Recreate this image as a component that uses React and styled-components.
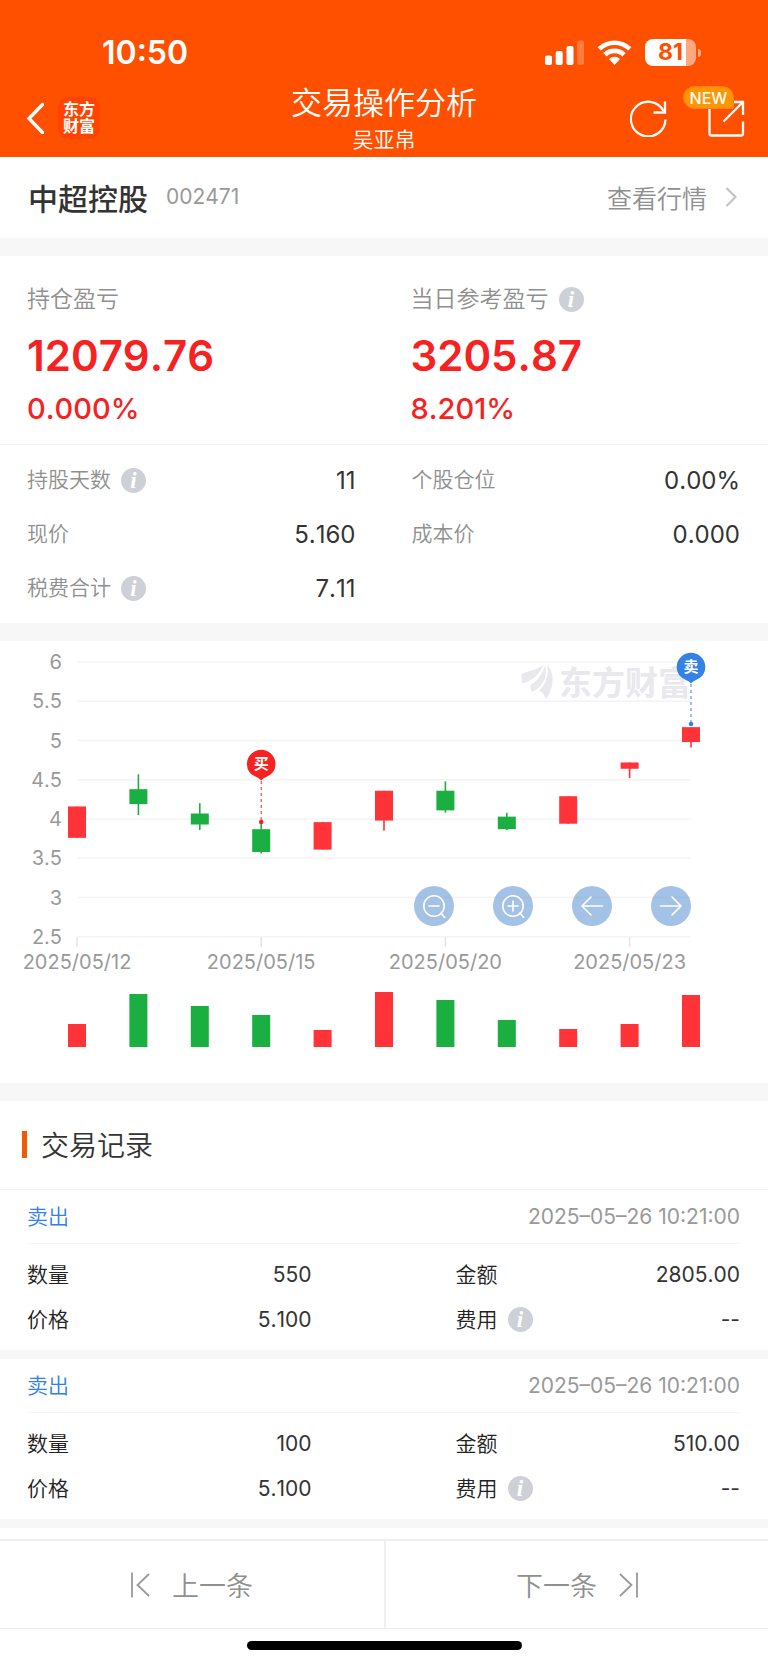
import React from 'react';
import styled, { createGlobalStyle } from 'styled-components';

const GlobalStyle = createGlobalStyle`
  * {
    box-sizing: border-box;
  }

  body {
    margin: 0;
    background: #fff;
    color: #333;
    font-family: Inter, 'Noto Sans CJK SC', sans-serif;
    font-weight: 350;
    font-kerning: none;
  }

  h1, h2, h3, p, dl, dd, dt {
    margin: 0;
    font-size: inherit;
    font-weight: inherit;
  }

  button {
    padding: 0;
    border: 0;
    background: none;
    color: inherit;
    font: inherit;
    cursor: pointer;
  }

  svg {
    display: block;
  }
`;

const Header = styled.header`
  background: #ff5000;
  color: #fff;
`;

const StatusBar = styled.div`
  display: flex;
  align-items: center;
  justify-content: space-between;
  height: 79px;
  padding: 26px 67px 0 102px;
`;

const Clock = styled.span`
  font-size: 32px;
  font-weight: 600;
  line-height: 40px;
`;

const StatusIcons = styled.div`
  display: flex;
  align-items: center;
  gap: 13px;
`;

const Battery = styled.div`
  display: flex;
  align-items: center;
  gap: 2px;

  &::after {
    content: '';
    width: 3px;
    height: 8px;
    border-radius: 0 4px 4px 0;
    background: rgba(255, 255, 255, 0.5);
  }
`;

const BatteryLevel = styled.span`
  width: 51px;
  height: 27px;
  border-radius: 8px;
  background: linear-gradient(to right, #fff 81%, rgba(255, 255, 255, 0.5) 81%);
  color: #ff5000;
  font-size: 23px;
  font-weight: 700;
  line-height: 27px;
  text-align: center;
`;

const NavBar = styled.div`
  display: grid;
  grid-template-columns: 1fr auto 1fr;
  align-items: center;
  height: 78px;
  padding: 0 22px;
`;

const NavLeft = styled.div`
  display: flex;
  align-items: center;
  gap: 14px;
`;

const NavRight = styled.div`
  display: flex;
  justify-content: flex-end;
  gap: 40px;
`;

const BrandTile = styled.span`
  display: grid;
  place-content: center;
  width: 42px;
  height: 42px;
  border-radius: 10px;
  background: #ff4300;
  font-size: 16px;
  font-weight: 700;
  line-height: 17px;
`;

const PageTitle = styled.div`
  align-self: end;
  padding-bottom: 1px;
  text-align: center;
`;

const Title = styled.h1`
  font-size: 31px;
  line-height: 42px;
`;

const Account = styled.p`
  font-size: 21px;
  line-height: 32px;
`;

const IconButton = styled.button`
  position: relative;
`;

const NewBadge = styled.span`
  position: absolute;
  top: -13px;
  left: -25px;
  width: 51px;
  height: 23px;
  border: 1px solid #ff7f1c;
  border-radius: 12px 12px 2px 12px;
  background: #ff9500;
  font-size: 16px;
  font-weight: 500;
  line-height: 22px;
  text-align: center;
`;

const Section = styled.section`
  border-bottom: 18px solid #f7f7f7;
`;

const StockBar = styled(Section)`
  display: flex;
  align-items: center;
  justify-content: space-between;
  height: 99px;
  padding: 0 31px 2px 28px;
`;

const StockName = styled.h2`
  display: flex;
  align-items: center;
  gap: 18px;
  font-size: 30px;
  font-weight: 500;

  span {
    color: #999;
    font-size: 21px;
    font-weight: 400;
  }
`;

const QuoteLink = styled.a`
  display: flex;
  align-items: center;
  gap: 18px;
  color: #8f8f8f;
  font-size: 25px;
  text-decoration: none;
`;

const Profits = styled.div`
  display: grid;
  grid-template-columns: 1fr 1fr;
  padding: 26px 28px 21px 27px;
  border-bottom: 1px solid #f2f2f2;
`;

const Profit = styled.div`
  &:last-child {
    padding-left: 27px;
  }
`;

const Label = styled.span`
  display: flex;
  align-items: center;
  gap: 10px;
  color: ${(props) => (props.$dark ? '#222' : '#8f8f8f')};
  font-size: ${(props) => (props.$large ? 23 : 21)}px;
  line-height: 34px;
`;

const ProfitValue = styled.p`
  color: #f62222;
  font-size: 42px;
  font-weight: 600;
  line-height: 79px;
`;

const ProfitRate = styled.p`
  color: #f62222;
  font-size: 29px;
  font-weight: 500;
  line-height: 28px;
`;

const Facts = styled.dl`
  display: grid;
  grid-template-columns: 1fr 1fr;
  grid-auto-rows: 54px;
  column-gap: 56px;
  padding: 8px 28px 8px 27px;
  font-size: 24px;
`;

const Fact = styled.div`
  display: flex;
  align-items: center;
  justify-content: space-between;

  dd {
    font-weight: 400;
  }
`;

const InfoButton = styled.button`
  width: 25px;
  height: 25px;
  border-radius: 50%;
  background: #cdd0d7;
  color: #fff;
  font-family: 'Liberation Serif', serif;
  font-size: 23px;
  font-style: italic;
  font-weight: 700;
  line-height: 25px;
  text-align: center;
`;

const ChartSection = styled(Section)`
  position: relative;
`;

const ChartTools = styled.div`
  position: absolute;
  top: 245px;
  right: 77px;
  display: flex;
  gap: 39px;
`;

const ToolButton = styled.button`
  display: grid;
  place-content: center;
  width: 40px;
  height: 40px;
  border-radius: 50%;
  background: rgba(71, 133, 203, 0.5);
`;

const RecordsTitle = styled.h2`
  display: flex;
  align-items: center;
  gap: 14px;
  height: 89px;
  padding: 0 0 2px 22px;
  border-bottom: 1px solid #f4f4f4;
  font-size: 28px;

  &::before {
    content: '';
    width: 5px;
    height: 27px;
    background: #f05a00;
  }
`;

const Record = styled.article`
  padding: 0 28px 0 27px;
  border-bottom: 9px solid #f7f7f7;
`;

const RecordHead = styled.div`
  display: flex;
  align-items: center;
  justify-content: space-between;
  height: 54px;
  border-bottom: 1px solid #f4f4f4;
  font-size: 21px;

  h3 {
    padding-bottom: 4px;
    color: #2f80ed;
  }

  time {
    color: #999;
    font-weight: 400;
  }
`;

const RecordBody = styled.dl`
  display: grid;
  grid-template-columns: 1fr 1fr;
  grid-auto-rows: 45px;
  column-gap: 144px;
  padding: 8px 0;
  font-size: 21px;
`;

const Pager = styled.nav`
  display: grid;
  grid-template-columns: 1fr 1fr;
  margin-top: 11px;
  border: solid #f0f0f0;
  border-width: 2px 0 1px;
`;

const PagerButton = styled.button`
  display: flex;
  align-items: center;
  justify-content: center;
  gap: 22px;
  height: 87px;
  color: #8f8f8f;
  font-size: 27px;

  & + & {
    border-left: 2px solid #f0f0f0;
  }
`;

const HomeIndicator = styled.div`
  width: 275px;
  height: 9px;
  margin: 12px auto 15px;
  border-radius: 5px;
  background: #000;
`;

const RED = '#ff3338';
const GREEN = '#1aaf40';

// [open, close, high, low, volume]
const DAYS = [
  [3.76, 4.16, 4.16, 3.76, 23],
  [4.38, 4.19, 4.57, 4.05, 53],
  [4.07, 3.93, 4.2, 3.86, 41],
  [3.87, 3.58, 3.94, 3.56, 32],
  [3.61, 3.96, 3.96, 3.61, 17],
  [3.98, 4.36, 4.36, 3.85, 55],
  [4.36, 4.11, 4.48, 4.08, 47],
  [4.03, 3.87, 4.08, 3.86, 27],
  [3.94, 4.29, 4.29, 3.94, 18],
  [4.64, 4.72, 4.72, 4.52, 23],
  [4.98, 5.17, 5.17, 4.91, 52],
];

const PRICES = [6, 5.5, 5, 4.5, 4, 3.5, 3, 2.5];

const DATES = [
  [0, '2025/05/12'],
  [3, '2025/05/15'],
  [6, '2025/05/20'],
  [9, '2025/05/23'],
];

const RECORDS = [
  { id: 1, time: '2025–05–26 10:21:00', count: '550', amount: '2805.00', price: '5.100' },
  { id: 2, time: '2025–05–26 10:21:00', count: '100', amount: '510.00', price: '5.100' },
];

const dayX = (index) => 77 + index * 61.4;
const priceY = (price) => 21 + (6 - price) * 78.5;

const Marker = ({ day, y, end, color, text }) => (
  <g transform={`translate(${dayX(day)} ${y})`}>
    <line y1="17" y2={end - y} stroke={color} strokeDasharray="3 3" />
    <circle cy={end - y} r="2.3" fill={color} />
    <path d="M0 16.5 C-3 13 -8 12.5 -11.5 8.5 A14.3 14.3 0 1 1 11.5 8.5 C8 12.5 3 13 0 16.5Z" fill={color} />
    <text y="5" fontSize="15" fontWeight="700" fill="#fff" textAnchor="middle">{text}</text>
  </g>
);

const Chart = () => (
  <svg viewBox="0 0 768 442" width="100%" role="img" aria-label="K线图">
    {PRICES.map((price) => (
      <g key={price}>
        <line x1="77" x2="691" y1={priceY(price)} y2={priceY(price)} stroke="#f4f4f4" strokeWidth="1.5" />
        <text x="62" y={priceY(price) + 7} fontSize="20" fontWeight="400" fill="#999" textAnchor="end">{price}</text>
      </g>
    ))}
    {DATES.map(([index, date]) => (
      <g key={date}>
        <line x1={dayX(index)} x2={dayX(index)} y1="296" y2="306" stroke="#e4e4e4" strokeWidth="1.5" />
        <text x={dayX(index)} y="328" fontSize="20" fontWeight="400" fill="#999" textAnchor="middle">{date}</text>
      </g>
    ))}
    <g fill="#e8e8ed">
      <path d="M521.7 33.3 C527 29.7 535 29.7 543.7 24 C540 32.3 532 40.7 521.7 42.3Z" />
      <path d="M545 24.3 C548 36 542 47.5 532 50.7 C530 47 530 45 530.5 44 C538 39.7 543 32.3 545 24.3Z" />
      <path d="M547.3 24.3 C554.3 30.7 555 45.7 546 58.3 C544.3 54 542 50.7 539 49.7 C547 42.3 549 32 547.3 24.3Z" />
      <text x="559" y="54" fontSize="33" fontWeight="700">东方财富</text>
    </g>
    {DAYS.map(([open, close, high, low, volume], index) => {
      const x = dayX(index);
      const color = close > open ? RED : GREEN;
      const top = priceY(Math.max(open, close));
      return (
        <g key={index} fill={color}>
          <line x1={x} x2={x} y1={priceY(high)} y2={priceY(low)} stroke={color} strokeWidth="1.6" />
          <rect x={x - 9} y={top} width="18" height={priceY(Math.min(open, close)) - top} />
          <rect x={x - 9} y={406 - volume} width="18" height={volume} />
        </g>
      );
    })}
    <Marker day={3} y={123} end={181} color="#f62222" text="买" />
    <Marker day={10} y={26} end={83} color="#3482e4" text="卖" />
  </svg>
);

const ToolIcon = ({ children }) => (
  <svg width="24" height="24" viewBox="0 0 24 24" fill="none" stroke="#fff" strokeWidth="1.6" strokeLinecap="round" strokeLinejoin="round">
    {children}
  </svg>
);

const Info = ({ about }) => (
  <InfoButton type="button" aria-label={`${about}说明`}>i</InfoButton>
);

const Row = ({ name, value, info, dark }) => (
  <Fact>
    <dt>
      <Label $dark={dark}>
        {name}
        {info && <Info about={name} />}
      </Label>
    </dt>
    <dd>{value}</dd>
  </Fact>
);

const App = () => {
  return (
    <>
      <GlobalStyle />
      <Header>
        <StatusBar>
          <Clock>10:50</Clock>
          <StatusIcons>
            <svg width="39" height="26" viewBox="0 0 39 26" fill="#fff">
              <rect x="0" y="15.5" width="7" height="9.5" rx="2" />
              <rect x="10.7" y="11" width="7" height="14" rx="2" />
              <rect x="21.5" y="6" width="7" height="19" rx="2" />
              <rect x="32.2" y="0.5" width="6.8" height="24.5" rx="2" opacity="0.25" />
            </svg>
            <svg width="35" height="26" viewBox="0 0 35 26" fill="#fff">
              <path d="M0.6 7.3 A24.5 24.5 0 0 1 34.4 7.3 L31.2 10.6 A19.8 19.8 0 0 0 3.8 10.6Z" />
              <path d="M6.3 13.1 A16.2 16.2 0 0 1 28.7 13.1 L25.4 16.4 A11.5 11.5 0 0 0 9.6 16.4Z" />
              <path d="M12 18.9 A8.2 8.2 0 0 1 23 18.9 L17.5 25Z" />
            </svg>
            <Battery>
              <BatteryLevel>81</BatteryLevel>
            </Battery>
          </StatusIcons>
        </StatusBar>
        <NavBar>
          <NavLeft>
            <IconButton type="button" aria-label="返回">
              <svg width="22" height="32" viewBox="0 0 22 32" fill="none" stroke="#fff" strokeWidth="3.4" strokeLinecap="round">
                <path d="M20.5 2.5 L7 16.5 L20.5 30.5" />
              </svg>
            </IconButton>
            <BrandTile>东方<br />财富</BrandTile>
          </NavLeft>
          <PageTitle>
            <Title>交易操作分析</Title>
            <Account>吴亚帛</Account>
          </PageTitle>
          <NavRight>
            <IconButton type="button" aria-label="刷新">
              <svg width="38" height="38" viewBox="0 0 38 38" fill="none" stroke="#fff" strokeWidth="2.3">
                <path d="M35.5 20.5 A17.3 17.3 0 1 1 33.5 12" />
                <path d="M35 2.5 V13.5 H23.5" />
              </svg>
            </IconButton>
            <IconButton type="button" aria-label="分享">
              <svg width="38" height="38" viewBox="0 0 38 38" fill="none" stroke="#fff" strokeWidth="2.3">
                <path d="M14 3 H1.5 V34.5 Q1.5 36.5 3.5 36.5 H33 Q35 36.5 35 34.5 V22.5" />
                <path d="M24 3 H35 V16 M35 3 L15.5 22.5" />
              </svg>
              <NewBadge>NEW</NewBadge>
            </IconButton>
          </NavRight>
        </NavBar>
      </Header>

      <main>
        <StockBar>
          <StockName>中超控股 <span>002471</span></StockName>
          <QuoteLink href="#quote">
            查看行情
            <svg width="12" height="20" viewBox="0 0 12 20" fill="none" stroke="#c4c4c4" strokeWidth="2.2">
              <path d="M1.5 1 L10.5 10 L1.5 19" />
            </svg>
          </QuoteLink>
        </StockBar>

        <Section>
          <Profits>
            <Profit>
              <Label $large>持仓盈亏</Label>
              <ProfitValue>12079.76</ProfitValue>
              <ProfitRate>0.000%</ProfitRate>
            </Profit>
            <Profit>
              <Label $large>当日参考盈亏 <Info about="当日参考盈亏" /></Label>
              <ProfitValue>3205.87</ProfitValue>
              <ProfitRate>8.201%</ProfitRate>
            </Profit>
          </Profits>
          <Facts>
            <Row name="持股天数" value="11" info />
            <Row name="个股仓位" value="0.00%" />
            <Row name="现价" value="5.160" />
            <Row name="成本价" value="0.000" />
            <Row name="税费合计" value="7.11" info />
          </Facts>
        </Section>

        <ChartSection>
          <Chart />
          <ChartTools>
            <ToolButton type="button" aria-label="缩小">
              <ToolIcon>
                <circle cx="12" cy="12" r="10.2" />
                <path d="M7 12 H17 M19 19 L23 24" />
              </ToolIcon>
            </ToolButton>
            <ToolButton type="button" aria-label="放大">
              <ToolIcon>
                <circle cx="12" cy="12" r="10.2" />
                <path d="M7 12 H17 M12 7 V17 M19 19 L23 24" />
              </ToolIcon>
            </ToolButton>
            <ToolButton type="button" aria-label="向前">
              <ToolIcon>
                <path d="M22.5 12 H2 M11 3 L2 12 L11 21" />
              </ToolIcon>
            </ToolButton>
            <ToolButton type="button" aria-label="向后">
              <ToolIcon>
                <path d="M1.5 12 H22 M13 3 L22 12 L13 21" />
              </ToolIcon>
            </ToolButton>
          </ChartTools>
        </ChartSection>

        <RecordsTitle>交易记录</RecordsTitle>
        {RECORDS.map((record) => (
          <Record key={record.id}>
            <RecordHead>
              <h3>卖出</h3>
              <time>{record.time}</time>
            </RecordHead>
            <RecordBody>
              <Row dark name="数量" value={record.count} />
              <Row dark name="金额" value={record.amount} />
              <Row dark name="价格" value={record.price} />
              <Row dark name="费用" value="--" info />
            </RecordBody>
          </Record>
        ))}
      </main>

      <Pager>
        <PagerButton type="button">
          <svg width="19" height="26" viewBox="0 0 19 26" fill="none" stroke="#999" strokeWidth="1.8">
            <path d="M1 0.5 V25.5 M18 2 L6.5 13 L18 24" />
          </svg>
          上一条
        </PagerButton>
        <PagerButton type="button">
          下一条
          <svg width="19" height="26" viewBox="0 0 19 26" fill="none" stroke="#999" strokeWidth="1.8">
            <path d="M18 0.5 V25.5 M1 2 L12.5 13 L1 24" />
          </svg>
        </PagerButton>
      </Pager>
      <HomeIndicator />
    </>
  );
}

export default App;
